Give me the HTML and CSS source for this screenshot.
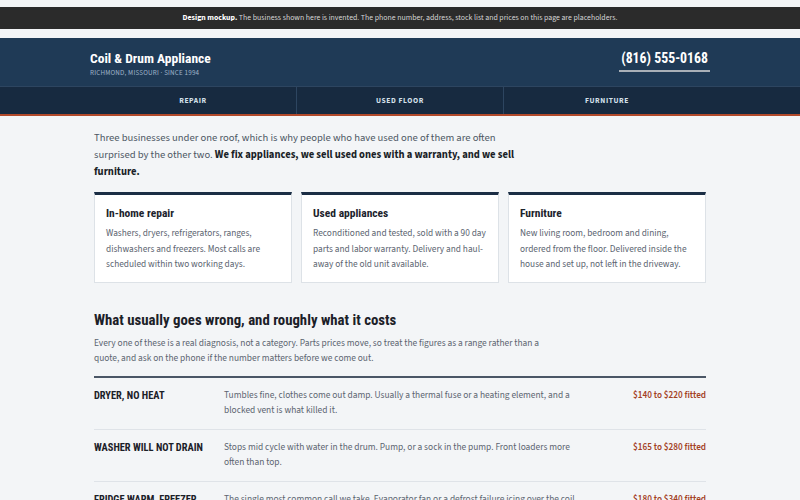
FILE: index.html
```html
<!DOCTYPE html>
<html lang="en">

<head>
  <meta charset="UTF-8">
  <meta name="viewport" content="width=device-width, initial-scale=1.0">
  <title>Coil &amp; Drum Appliance</title>
  <link rel="stylesheet" href="styles.css">
</head>

<body>
  <div class="mock-note">
    <strong>Design mockup.</strong> The business shown here is invented. The phone number, address, stock list and prices on this page are placeholders.
  </div>

  <header class="site-header">
    <div class="wrap head-row">
      <div class="brand">
        <h1 class="brand-name">Coil &amp; Drum Appliance</h1>
        <div class="brand-sub">Richmond, Missouri · Since 1994</div>
      </div>
      <a class="phone" href="#">(816) 555-0168</a>
    </div>
  </header>

  <nav class="site-nav">
    <ul class="wrap">
      <li><a href="#">Repair</a></li>
      <li><a href="#">Used floor</a></li>
      <li><a href="#">Furniture</a></li>
    </ul>
  </nav>

  <main class="content">
    <p class="intro">
      Three businesses under one roof, which is why people who have used one of them are often
      surprised by the other two. <strong>We fix appliances, we sell used ones with a warranty, and we sell
      furniture.</strong>
    </p>

    <div class="cards">
      <div class="card">
        <h3>In-home repair</h3>
        <p>Washers, dryers, refrigerators, ranges, dishwashers and freezers. Most calls are scheduled within two working days.</p>
      </div>
      <div class="card">
        <h3>Used appliances</h3>
        <p>Reconditioned and tested, sold with a 90 day parts and labor warranty. Delivery and haul-away of the old unit available.</p>
      </div>
      <div class="card">
        <h3>Furniture</h3>
        <p>New living room, bedroom and dining, ordered from the floor. Delivered inside the house and set up, not left in the driveway.</p>
      </div>
    </div>

    <section class="faults">
      <h2>What usually goes wrong, and roughly what it costs</h2>
      <p class="lede">Every one of these is a real diagnosis, not a category. Parts prices move, so treat the figures as a range rather than a quote, and ask on the phone if the number matters before we come out.</p>

      <div class="fault-list">
        <div class="fault">
          <h4>Dryer, no heat</h4>
          <p>Tumbles fine, clothes come out damp. Usually a thermal fuse or a heating element, and a blocked vent is what killed it.</p>
          <div class="price">$140 to $220 fitted</div>
        </div>
        <div class="fault">
          <h4>Washer will not drain</h4>
          <p>Stops mid cycle with water in the drum. Pump, or a sock in the pump. Front loaders more often than top.</p>
          <div class="price">$165 to $280 fitted</div>
        </div>
        <div class="fault">
          <h4>Fridge warm, freezer fine</h4>
          <p>The single most common call we take. Evaporator fan or a defrost failure icing over the coil.</p>
          <div class="price">$180 to $340 fitted</div>
        </div>
      </div>
    </section>
  </main>
</body>

</html>
```

FILE: styles.css
```css
body {
  margin: 0;
  background-color: #f3f5f7;
  color: #4d5763;
  font-family: "Source Sans 3", "Source Sans Pro", Lato, sans-serif;
}

.wrap {
  width: 620px;
  margin: 0 auto;
}

.mock-note {
  margin: 7px 0 9px;
  height: 22px;
  line-height: 22px;
  background-color: #2b2b2b;
  color: #d6d6d6;
  font-size: 7.8px;
  text-align: center;
}

.mock-note strong {
  color: #fff;
}

.site-header {
  background-color: #1f3a56;
}

.head-row {
  display: flex;
  justify-content: space-between;
  align-items: flex-start;
  height: 48px;
}

.brand {
  padding-top: 12px;
}

.brand-name {
  margin: 0;
  font-family: "Roboto Condensed", "Liberation Sans Narrow", Roboto, sans-serif;
  font-size: 13.5px;
  line-height: 16px;
  color: #fff;
}

.brand-sub {
  margin-top: 3px;
  font-size: 7px;
  line-height: 9px;
  text-transform: uppercase;
  letter-spacing: 0.2px;
  color: #9fb4c9;
}

.phone {
  display: block;
  margin-top: 12px;
  padding: 0 2px 4px;
  font-family: "Roboto Condensed", "Liberation Sans Narrow", Roboto, sans-serif;
  font-weight: bold;
  font-size: 13.8px;
  line-height: 16px;
  color: #fff;
  text-decoration: none;
  border-bottom: 2px solid #a9b0b8;
}

.site-nav {
  background-color: #172a40;
  border-top: 1px solid #2d4560;
  border-bottom: 2px solid #b24a2b;
}

.site-nav ul {
  display: flex;
  list-style: none;
  padding: 0;
  margin: 0 auto;
}

.site-nav li {
  flex: 1;
  text-align: center;
  border-left: 1px solid #2d4560;
}

.site-nav li:first-child {
  border-left: none;
}

.site-nav a {
  display: block;
  height: 27px;
  line-height: 27px;
  font-size: 7.5px;
  font-weight: bold;
  letter-spacing: 0.6px;
  text-transform: uppercase;
  color: #d5e0eb;
  text-decoration: none;
}

.content {
  width: 612px;
  margin: 0 auto;
}

.intro {
  margin: 13px 0 12px;
  max-width: 436px;
  font-size: 10.6px;
  line-height: 17px;
}

.intro strong {
  color: #1a1f27;
}

.cards {
  display: grid;
  grid-template-columns: repeat(3, 1fr);
  gap: 9px;
}

.card {
  background-color: #fff;
  border: 1px solid #dde2e7;
  border-top: 3px solid #1b2e45;
  padding: 11px 8px 9px 11px;
}

.card h3 {
  margin: 0 0 6px;
  font-family: "Roboto Condensed", "Liberation Sans Narrow", Roboto, sans-serif;
  font-size: 11.5px;
  color: #1c232c;
}

.card p {
  margin: 0;
  font-size: 9.3px;
  line-height: 15.5px;
  color: #5b6470;
}

.faults {
  margin-top: 28px;
}

.faults h2 {
  margin: 0 0 7px;
  font-family: "Roboto Condensed", "Liberation Sans Narrow", Roboto, sans-serif;
  font-size: 14.8px;
  color: #1b2028;
}

.lede {
  margin: 0 0 10px;
  max-width: 468px;
  font-size: 9.4px;
  line-height: 15px;
  color: #5b6470;
}

.fault-list {
  border-top: 2px solid #4a5666;
}

.fault {
  display: grid;
  grid-template-columns: 118px 1fr 110px;
  column-gap: 12px;
  padding: 10px 0 10px;
  border-bottom: 1px solid #dfe3e8;
}

.fault h4 {
  margin: 0;
  font-family: "Roboto Condensed", "Liberation Sans Narrow", Roboto, sans-serif;
  font-size: 10.4px;
  line-height: 15.5px;
  text-transform: uppercase;
  color: #1b2028;
}

.fault p {
  margin: 0;
  max-width: 362px;
  font-size: 9.4px;
  line-height: 15.5px;
  color: #5b6470;
}

.price {
  text-align: right;
  font-size: 9.2px;
  line-height: 15.5px;
  font-weight: 600;
  color: #a3411f;
}
```
